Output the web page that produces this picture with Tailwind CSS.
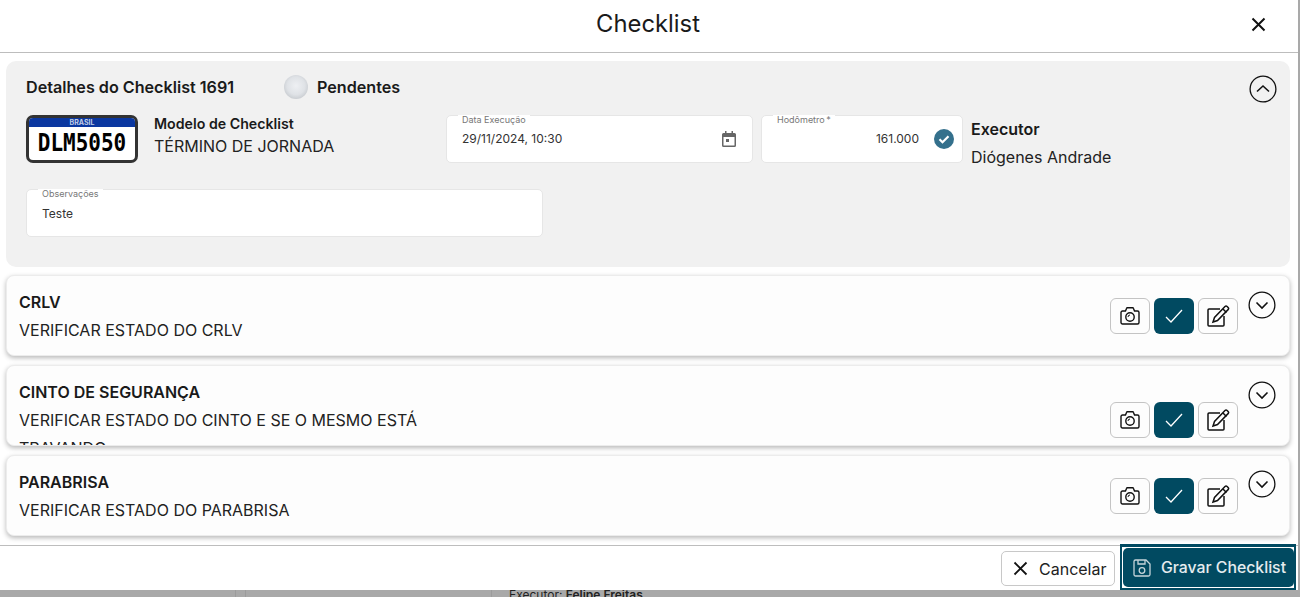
<!DOCTYPE html>
<html>
<head>
  <title>Checklist</title>
  <script src="https://cdn.jsdelivr.net/npm/@tailwindcss/browser@4"></script>
</head>
<body class="bg-[#a9a9a9] h-[597px] overflow-hidden font-['Inter',sans-serif] text-[#1a1a1a]">
  <div class="w-[1298px] h-[590px] bg-white flex flex-col overflow-hidden">
    <!-- Header -->
    <div class="h-[53px] shrink-0 border-b border-[#bdbdbd] flex items-center relative">
      <div class="w-full text-center text-[23.8px] leading-[46px] pb-[5px] pr-[2px]">Checklist</div>
      <svg class="absolute left-[1250px] top-[16px]" width="17" height="17" viewBox="0 0 17 17" fill="none" stroke="#111" stroke-width="2"><path d="M2.5 2.5l12 12M14.5 2.500l-12 12"/></svg>
    </div>

    <div class="h-[492px] shrink-0 pl-[6px] pt-[8px]">
      <!-- Detalhes -->
      <div class="w-[1284px] h-[206px] bg-[#f1f1f1] rounded-[10px] pl-[20px] pt-[14px] relative">
        <div class="flex items-center h-[24px]">
          <div class="w-[258px] text-[16.15px] font-semibold">Detalhes do Checklist 1691</div>
          <div class="w-[24px] h-[24px] rounded-full bg-[radial-gradient(circle_at_50%_45%,#eef0f3_0%,#dfe2e6_50%,#b4b8bd_100%)]"></div>
          <div class="ml-[9px] text-[16.15px] font-semibold">Pendentes</div>
        </div>
        <svg class="absolute left-[1243px] top-[14px]" width="28" height="28" viewBox="0 0 28 28" fill="none" stroke="#111" stroke-width="1.300"><circle cx="14" cy="14" r="12.900"/><path d="M8 16.500L14 11l6 5.500" stroke-width="1.600"/></svg>

        <div class="flex mt-[16px] h-[48px]">
          <!-- Placa -->
          <div class="w-[112px] h-[48px] shrink-0 rounded-[7px] border-[3px] border-[#333] bg-white overflow-hidden">
            <div class="h-[9px] bg-[#0a37a0] text-white/75 text-[7px] font-bold leading-[9px] text-center">BRASIL</div>
            <div class="text-center font-['DejaVu_Sans_Mono',monospace] font-bold text-[21px] leading-[32px] text-black scale-y-[1.2]">DLM5050</div>
          </div>
          <div class="w-[292px] ml-[16px] shrink-0">
            <div class="text-[14.2px] font-semibold leading-[17px]">Modelo de Checklist</div>
            <div class="text-[16px] leading-[20px] mt-[4px] text-[#222]">TÉRMINO DE JORNADA</div>
          </div>
          <!-- Data -->
          <div class="w-[307px] h-[48px] shrink-0 bg-white rounded-[5px] border border-[#e6e6e6] relative pl-[15px] pr-[16px] flex items-center justify-between">
            <span class="absolute left-[11px] top-[-1px] px-[4px] text-[9px] leading-[10px] text-[#777] bg-white">Data Execução</span>
            <span class="text-[12px] text-[#333]">29/11/2024, 10:30</span>
            <svg width="14" height="16" viewBox="0 0 14 16" fill="#666"><path d="M3 0h1.500v2h5V0H11v2h1.500A1.500 1.500 0 0 1 14 3.500v11a1.500 1.500 0 0 1-1.500 1.500h-11A1.500 1.500 0 0 1 0 14.500v-11A1.500 1.500 0 0 1 1.500 2H3zM1.500 6v8.500h11V6z"/><rect x="4" y="8" width="3" height="3"/></svg>
          </div>
          <!-- Hodometro -->
          <div class="w-[202px] h-[48px] ml-[8px] shrink-0 bg-white rounded-[5px] border border-[#e6e6e6] relative pr-[8px] flex items-center justify-end">
            <span class="absolute left-[11px] top-[-1px] px-[4px] text-[9px] leading-[10px] text-[#777] bg-white">Hodômetro&thinsp;*</span>
            <span class="text-[12px] text-[#333]">161.000</span>
            <svg class="ml-[15px]" width="20" height="20" viewBox="0 0 20 20"><circle cx="10" cy="10" r="10" fill="#34708c"/><path d="M5.500 10.300l3 3 6-6" fill="none" stroke="#fff" stroke-width="2.200"/></svg>
          </div>
          <div class="ml-[8px]">
            <div class="text-[16px] font-semibold leading-[18px] mt-[5px]">Executor</div>
            <div class="text-[16px] leading-[20px] mt-[9px] text-[#222]">Diógenes Andrade</div>
          </div>
        </div>

        <!-- Observacoes -->
        <div class="w-[517px] h-[48px] mt-[26px] bg-white rounded-[5px] border border-[#e6e6e6] relative pl-[15px] pt-[1px] flex items-center">
          <span class="absolute left-[11px] top-[-1px] px-[4px] text-[9px] leading-[10px] text-[#777] bg-white">Observações</span>
          <span class="text-[12px] text-[#333]">Teste</span>
        </div>
      </div>

      <!-- Itens -->
      <div class="flex flex-col gap-[9px] mt-[8px]">
        <div class="w-[1284px] h-[81px] bg-[#fdfdfd] rounded-[8px] border border-[#ececec] shadow-[0_2px_5px_rgba(0,0,0,0.28)] overflow-hidden flex pl-[12px]">
          <div class="w-[420px] pt-[17px]">
            <div class="text-[16px] font-semibold leading-[18px]">CRLV</div>
            <div class="text-[16px] leading-[28px] mt-[5px] text-[#222]">VERIFICAR ESTADO DO CRLV</div>
          </div>
          <div class="flex gap-[4px] ml-[671px] mt-[22px] h-[36px]">
            <button class="w-[40px] h-[36px] rounded-[6px] border border-[#c4c4c4] flex items-center justify-center">
              <svg width="20" height="18" viewBox="0 0 20 18" fill="none" stroke="#111" stroke-width="1.400"><path d="M1 5.500A1.500 1.500 0 0 1 2.500 4H5.500L6.500 1.500a1 1 0 0 1 1-.7h5a1 1 0 0 1 1 .7L14.500 4h3A1.500 1.500 0 0 1 19 5.500v10a1.500 1.500 0 0 1-1.500 1.500h-15A1.500 1.500 0 0 1 1 15.500z"/><circle cx="10" cy="10" r="4.200"/><path d="M8 10a2 2 0 0 1 2-2" stroke-width="1"/></svg>
            </button>
            <button class="w-[40px] h-[36px] rounded-[6px] bg-[#014a61] flex items-center justify-center">
              <svg width="18" height="14" viewBox="0 0 18 14" fill="none" stroke="#fff" stroke-width="1.300"><path d="M1 8l5 5L17 1"/></svg>
            </button>
            <button class="w-[40px] h-[36px] rounded-[6px] border border-[#c4c4c4] flex items-center justify-center">
              <svg width="24" height="22" viewBox="0 0 24 22" fill="none" stroke="#111" stroke-width="1.500"><path d="M14 4H3A1 1 0 0 0 2 5v15a1 1 0 0 0 1 1h14a1 1 0 0 0 1-1V11"/><path d="M19 1.500a1.500 1.500 0 0 1 2.100 0l1 1a1.500 1.500 0 0 1 0 2.100L11.500 15.500 7 17l1.500-4.500z"/><path d="M17 4l3.500 3.500"/></svg>
            </button>
          </div>
          <svg class="ml-[10px] mt-[15px]" width="28" height="28" viewBox="0 0 28 28" fill="none" stroke="#111" stroke-width="1.300"><circle cx="14" cy="14" r="12.900"/><path d="M8.500 11.500L14 17l5.500-5.500" stroke-width="1.600"/></svg>
        </div>

        <div class="w-[1284px] h-[81px] bg-[#fdfdfd] rounded-[8px] border border-[#ececec] shadow-[0_2px_5px_rgba(0,0,0,0.28)] overflow-hidden flex pl-[12px]">
          <div class="w-[420px] pt-[17px]">
            <div class="text-[16px] font-semibold leading-[18px]">CINTO DE SEGURANÇA</div>
            <div class="text-[16px] leading-[28px] mt-[5px] text-[#222]">VERIFICAR ESTADO DO CINTO E SE O MESMO ESTÁ TRAVANDO</div>
          </div>
          <div class="flex gap-[4px] ml-[671px] mt-[36px] h-[36px]">
            <button class="w-[40px] h-[36px] rounded-[6px] border border-[#c4c4c4] flex items-center justify-center">
              <svg width="20" height="18" viewBox="0 0 20 18" fill="none" stroke="#111" stroke-width="1.400"><path d="M1 5.500A1.500 1.500 0 0 1 2.500 4H5.500L6.500 1.500a1 1 0 0 1 1-.7h5a1 1 0 0 1 1 .7L14.500 4h3A1.500 1.500 0 0 1 19 5.500v10a1.500 1.500 0 0 1-1.500 1.500h-15A1.500 1.500 0 0 1 1 15.500z"/><circle cx="10" cy="10" r="4.200"/><path d="M8 10a2 2 0 0 1 2-2" stroke-width="1"/></svg>
            </button>
            <button class="w-[40px] h-[36px] rounded-[6px] bg-[#014a61] flex items-center justify-center">
              <svg width="18" height="14" viewBox="0 0 18 14" fill="none" stroke="#fff" stroke-width="1.300"><path d="M1 8l5 5L17 1"/></svg>
            </button>
            <button class="w-[40px] h-[36px] rounded-[6px] border border-[#c4c4c4] flex items-center justify-center">
              <svg width="24" height="22" viewBox="0 0 24 22" fill="none" stroke="#111" stroke-width="1.500"><path d="M14 4H3A1 1 0 0 0 2 5v15a1 1 0 0 0 1 1h14a1 1 0 0 0 1-1V11"/><path d="M19 1.500a1.500 1.500 0 0 1 2.100 0l1 1a1.500 1.500 0 0 1 0 2.100L11.500 15.500 7 17l1.500-4.500z"/><path d="M17 4l3.500 3.500"/></svg>
            </button>
          </div>
          <svg class="ml-[10px] mt-[15px]" width="28" height="28" viewBox="0 0 28 28" fill="none" stroke="#111" stroke-width="1.300"><circle cx="14" cy="14" r="12.900"/><path d="M8.500 11.500L14 17l5.500-5.500" stroke-width="1.600"/></svg>
        </div>

        <div class="w-[1284px] h-[81px] bg-[#fdfdfd] rounded-[8px] border border-[#ececec] shadow-[0_2px_5px_rgba(0,0,0,0.28)] overflow-hidden flex pl-[12px]">
          <div class="w-[420px] pt-[17px]">
            <div class="text-[16px] font-semibold leading-[18px]">PARABRISA</div>
            <div class="text-[16px] leading-[28px] mt-[5px] text-[#222]">VERIFICAR ESTADO DO PARABRISA</div>
          </div>
          <div class="flex gap-[4px] ml-[671px] mt-[22px] h-[36px]">
            <button class="w-[40px] h-[36px] rounded-[6px] border border-[#c4c4c4] flex items-center justify-center">
              <svg width="20" height="18" viewBox="0 0 20 18" fill="none" stroke="#111" stroke-width="1.400"><path d="M1 5.500A1.500 1.500 0 0 1 2.500 4H5.500L6.500 1.500a1 1 0 0 1 1-.7h5a1 1 0 0 1 1 .7L14.500 4h3A1.500 1.500 0 0 1 19 5.500v10a1.500 1.500 0 0 1-1.500 1.500h-15A1.500 1.500 0 0 1 1 15.500z"/><circle cx="10" cy="10" r="4.200"/><path d="M8 10a2 2 0 0 1 2-2" stroke-width="1"/></svg>
            </button>
            <button class="w-[40px] h-[36px] rounded-[6px] bg-[#014a61] flex items-center justify-center">
              <svg width="18" height="14" viewBox="0 0 18 14" fill="none" stroke="#fff" stroke-width="1.300"><path d="M1 8l5 5L17 1"/></svg>
            </button>
            <button class="w-[40px] h-[36px] rounded-[6px] border border-[#c4c4c4] flex items-center justify-center">
              <svg width="24" height="22" viewBox="0 0 24 22" fill="none" stroke="#111" stroke-width="1.500"><path d="M14 4H3A1 1 0 0 0 2 5v15a1 1 0 0 0 1 1h14a1 1 0 0 0 1-1V11"/><path d="M19 1.500a1.500 1.500 0 0 1 2.100 0l1 1a1.500 1.500 0 0 1 0 2.100L11.500 15.500 7 17l1.500-4.500z"/><path d="M17 4l3.500 3.500"/></svg>
            </button>
          </div>
          <svg class="ml-[10px] mt-[14px]" width="28" height="28" viewBox="0 0 28 28" fill="none" stroke="#111" stroke-width="1.300"><circle cx="14" cy="14" r="12.900"/><path d="M8.500 11.500L14 17l5.500-5.500" stroke-width="1.600"/></svg>
        </div>
      </div>
    </div>

    <!-- Footer -->
    <div class="h-[45px] shrink-0 border-t border-[#bdbdbd] flex items-start justify-end">
      <button class="w-[114px] h-[35px] mt-[5px] rounded-[5px] border border-[#c8c8c8] flex items-center pl-[11px] text-[16px] text-[#222]">
        <svg width="15" height="15" viewBox="0 0 15 15" fill="none" stroke="#111" stroke-width="1.800"><path d="M1.500 1.500l12 12M13.500 1.500l-12 12"/></svg>
        <span class="ml-[11px]">Cancelar</span>
      </button>
      <button class="w-[176px] h-[46px] ml-[5px] mr-[2px] mt-[-2px] border-t-[3px] border-b-[2px] border-x-[2px] border-[#014a61] bg-white pt-[1px] pb-[1px] pl-[1px]">
        <span class="h-full bg-[#014a61] rounded-[5px] flex items-center pl-[9px] text-[15.8px] font-medium text-white/90">
          <svg width="20" height="20" viewBox="0 0 20 20" fill="none" stroke="#c6d5da" stroke-width="1.300"><path d="M2 3.500A1.500 1.500 0 0 1 3.500 2H14l4 4v10.500a1.500 1.500 0 0 1-1.500 1.500h-13A1.500 1.500 0 0 1 2 16.500z"/><path d="M6 2v4h7V2"/><circle cx="10" cy="12.500" r="2.800"/></svg>
          <span class="ml-[9px]">Gravar Checklist</span>
        </span>
      </button>
    </div>
  </div>
  <!-- Fundo da pagina atras do modal -->
  <div class="h-[7px] overflow-hidden flex">
    <div class="w-[236px] border-r border-[#9c9c9c]"></div>
    <div class="w-[239px] ml-[9px] border-l border-[#9c9c9c]"></div>
    <div class="w-[9px] ml-[-1px] border-r border-[#9c9c9c] shrink-0"></div>
    <div class="pl-[17px] text-[12px] leading-[14px] mt-[-2px] text-[#222]">Executor: <span class="font-semibold">Felipe Freitas</span></div>
  </div>
</body>
</html>
